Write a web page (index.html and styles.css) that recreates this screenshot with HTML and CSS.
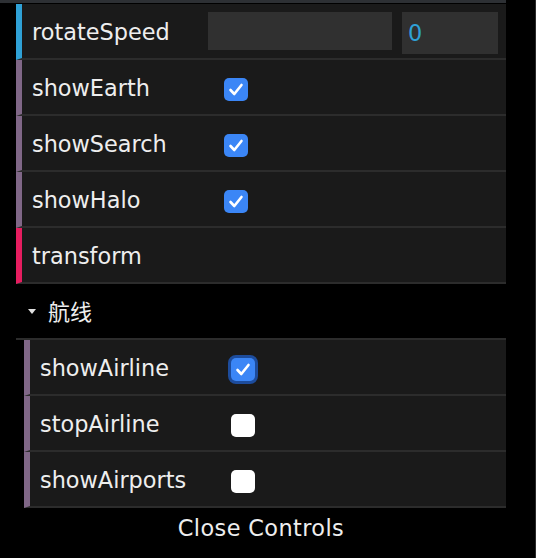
FILE: index.html
```html
<!DOCTYPE html>
<html>
<head>
<meta charset="utf-8">
<link rel="stylesheet" href="styles.css">
</head>
<body>
<div class="page">
  <div class="topstrip"></div>
  <div class="gui">
    <div class="row number">
      <span class="name">rotateSpeed</span>
      <div class="ctrl">
        <div class="slider"></div>
        <div class="numinput">0</div>
      </div>
    </div>
    <div class="row boolean">
      <span class="name">showEarth</span>
      <div class="ctrl"><span class="cb checked"><svg viewBox="0 0 24 23"><path d="M6.5 12 L10.3 16 L17.5 7"/></svg></span></div>
    </div>
    <div class="row boolean">
      <span class="name">showSearch</span>
      <div class="ctrl"><span class="cb checked"><svg viewBox="0 0 24 23"><path d="M6.5 12 L10.3 16 L17.5 7"/></svg></span></div>
    </div>
    <div class="row boolean">
      <span class="name">showHalo</span>
      <div class="ctrl"><span class="cb checked"><svg viewBox="0 0 24 23"><path d="M6.5 12 L10.3 16 L17.5 7"/></svg></span></div>
    </div>
    <div class="row function">
      <span class="name">transform</span>
    </div>
    <div class="folder">
      <div class="title"><span class="tri"></span><span class="title-text">航线</span></div>
      <div class="children">
        <div class="row boolean">
          <span class="name">showAirline</span>
          <div class="ctrl"><span class="cb checked focus"><svg viewBox="0 0 24 23"><path d="M6.5 12 L10.3 16 L17.5 7"/></svg></span></div>
        </div>
        <div class="row boolean">
          <span class="name">stopAirline</span>
          <div class="ctrl"><span class="cb"></span></div>
        </div>
        <div class="row boolean">
          <span class="name">showAirports</span>
          <div class="ctrl"><span class="cb"></span></div>
        </div>
      </div>
    </div>
    <div class="close">Close Controls</div>
  </div>
</div>
</body>
</html>
```
FILE: styles.css
```css
html, body {
  margin: 0;
  padding: 0;
  background: #000;
}
.page {
  width: 536px;
  height: 558px;
  box-sizing: border-box;
  border-right: 1px solid #2b2b2b;
  overflow: hidden;
  background: #000;
  font-family: "DejaVu Sans", "Noto Sans CJK SC", sans-serif;
  color: #eee;
}
.topstrip {
  width: 506px;
  height: 3px;
  background: #2d3034;
}
.gui {
  margin-left: 16px;
  width: 490px;
  padding-top: 1px;
}
.row {
  display: flex;
  align-items: flex-start;
  height: 54px;
  border-bottom: 2px solid #2c2c2c;
  border-left: 6px solid #806787;
  background: #1a1a1a;
  padding: 0 8px 0 10px;
}
.row.number { border-left-color: #2fa1d6; }
.row.function { border-left-color: #e61d5f; }
.name {
  width: 186px;
  flex: none;
  font-size: 22.4px;
  line-height: 50px;
  padding-top: 3px;
  white-space: nowrap;
}
.ctrl {
  display: flex;
  align-items: flex-start;
}
.slider {
  margin-left: -10px;
  margin-top: 8px;
  width: 184px;
  height: 38px;
  background: #303030;
}
.numinput {
  margin-left: 10px;
  margin-top: 8px;
  width: 96px;
  height: 42px;
  box-sizing: border-box;
  padding: 1px 6px 0;
  background: #303030;
  color: #2fa1d6;
  font-size: 22.4px;
  line-height: 41px;
}
.cb {
  display: block;
  margin-top: 18px;
  margin-left: 6px;
  width: 24px;
  height: 23px;
  border-radius: 5px;
  background: #fff;
}
.cb.checked {
  background: #3b86f6;
}
.cb.focus {
  box-shadow: 0 0 0 3px #1d4c9c;
}
.cb svg {
  display: block;
  width: 24px;
  height: 23px;
}
.cb svg path {
  fill: none;
  stroke: #fff;
  stroke-width: 2.6;
  stroke-linecap: round;
  stroke-linejoin: round;
}
.folder {
  display: block;
}
.title {
  display: flex;
  align-items: center;
  height: 54px;
  border-bottom: 2px solid #2c2c2c;
  background: #000;
}
.tri {
  margin-left: 12px;
  margin-top: 0;
  width: 0;
  height: 0;
  border-left: 4px solid transparent;
  border-right: 4px solid transparent;
  border-top: 5px solid #e0e0e0;
}
.title-text {
  margin-left: 12px;
  font-family: "Noto Sans CJK SC", sans-serif;
  font-size: 22px;
  line-height: 54px;
  margin-top: -3px;
}
.children {
  margin-left: 8px;
}
.children .name {
  width: 184px;
}
.children .cb {
  margin-left: 7px;
}
.close {
  height: 40px;
  line-height: 40px;
  text-align: center;
  font-size: 22.4px;
  background: #000;
  letter-spacing: 0.4px;
}
```
